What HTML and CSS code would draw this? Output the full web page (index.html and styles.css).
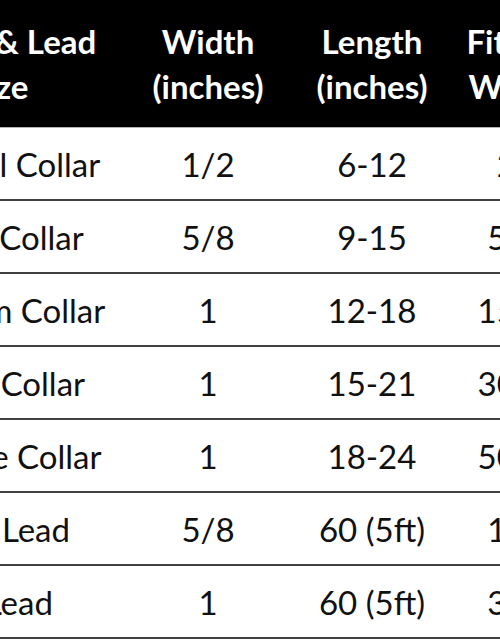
FILE: index.html
```html
<!DOCTYPE html>
<html>
<head>
<meta charset="utf-8">
<link rel="stylesheet" href="styles.css">
</head>
<body>
<div class="sheet">
  <div class="row head">
    <div class="cell">Collar &amp; Lead<br>Size</div>
    <div class="cell">Width<br>(inches)</div>
    <div class="cell">Length<br>(inches)</div>
    <div class="cell">Fits Pet<br>Weight</div>
  </div>
  <div class="row"><div class="cell">X-Small Collar</div><div class="cell">1/2</div><div class="cell">6-12</div><div class="cell">2-5</div></div>
  <div class="row"><div class="cell">Small Collar</div><div class="cell">5/8</div><div class="cell">9-15</div><div class="cell">5-15</div></div>
  <div class="row"><div class="cell">Medium Collar</div><div class="cell">1</div><div class="cell">12-18</div><div class="cell">15-30</div></div>
  <div class="row"><div class="cell">Large Collar</div><div class="cell">1</div><div class="cell">15-21</div><div class="cell">30-50</div></div>
  <div class="row"><div class="cell">X-Large Collar</div><div class="cell">1</div><div class="cell">18-24</div><div class="cell">50-80</div></div>
  <div class="row"><div class="cell">5/8" Lead</div><div class="cell">5/8</div><div class="cell">60 (5ft)</div><div class="cell">1-30</div></div>
  <div class="row"><div class="cell">1" Lead</div><div class="cell">1</div><div class="cell">60 (5ft)</div><div class="cell">3-80</div></div>
</div>
</body>
</html>
```
FILE: styles.css
```css
html, body {
  margin: 0;
  padding: 0;
  background: #ffffff;
  overflow: hidden;
}
body {
  width: 500px;
  height: 641px;
  font-family: Lato, "Liberation Sans", sans-serif;
  color: #111111;
}
.sheet {
  width: 718px;
  margin-left: -128px;
}
.row {
  display: grid;
  grid-template-columns: 254px 164px 164px 136px;
  height: 73px;
  box-sizing: border-box;
  border-bottom: 2px solid #404040;
  font-size: 33px;
}
.cell {
  display: flex;
  align-items: center;
  justify-content: center;
  text-align: center;
  white-space: nowrap;
}
.head {
  height: 128px;
  background: #000000;
  color: #ffffff;
  font-weight: 700;
  line-height: 45px;
  border-bottom: 1px solid #b4b4b4;
}
```
